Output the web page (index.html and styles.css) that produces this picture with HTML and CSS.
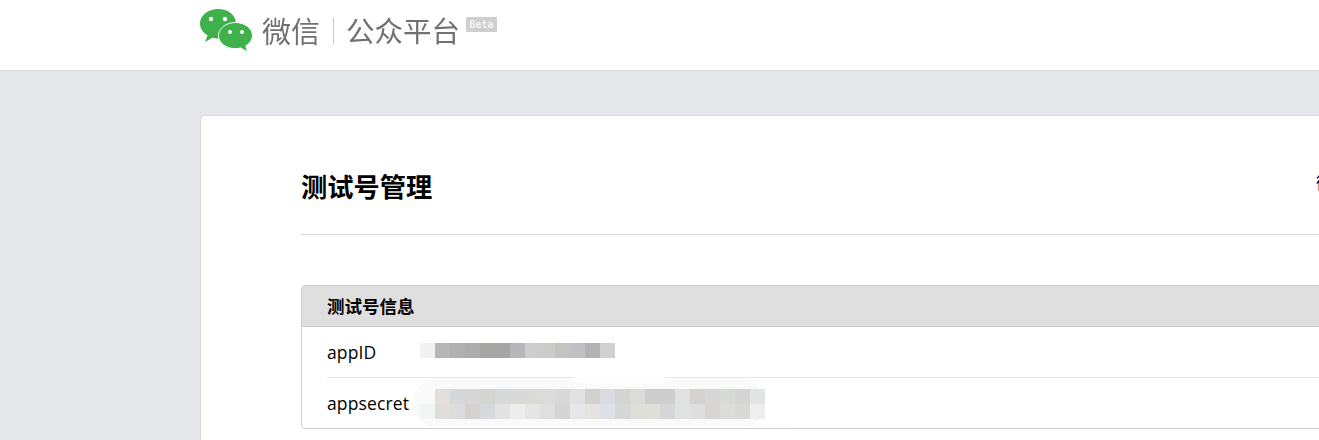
FILE: index.html
```html
<!DOCTYPE html>
<html lang="zh-CN">
<head>
<meta charset="utf-8">
<title>微信公众平台</title>
<link rel="stylesheet" href="styles.css">
</head>
<body>
<header class="topbar">
  <div class="logo">
    <svg class="logo-icon" width="54" height="44" viewBox="0 0 54 44" aria-hidden="true">
      <path d="M19 0C9 0 1 6.500 1 14.500c0 4.900 3 9.200 7.600 11.800L6 33l7.400-4.200c1.800.4 3.700.7 5.600.7 10 0 18-6.500 18-15S29 0 19 0z" fill="#3fb14a"/>
      <circle cx="12" cy="10" r="2.200" fill="#fff"/>
      <circle cx="26" cy="10" r="2.200" fill="#fff"/>
      <path d="M36.500 13.500c-9.300 0-17 5.900-17 13.200s7.700 13 17 13c1.900 0 3.700-.2 5.400-.7L48.500 43l-1.700-6.200c3.900-2.400 6.700-6 6.700-10.100 0-7.300-7.700-13.200-17-13.200z" fill="#3fb14a" stroke="#fff" stroke-width="1"/>
      <circle cx="31" cy="23" r="2" fill="#fff"/>
      <circle cx="43" cy="23" r="2" fill="#fff"/>
    </svg>
    <span class="logo-name">微信</span>
    <span class="logo-sep"></span>
    <span class="logo-sub">公众平台</span>
    <span class="logo-beta">Beta</span>
  </div>
</header>
<main class="page">
  <section class="card">
    <div class="title-row">
      <h1 class="title">测试号管理</h1>
      <a class="title-link" href="#">微信号</a>
    </div>
    <div class="panel">
      <h2 class="panel-head">测试号信息</h2>
      <div class="row">
        <span class="label">appID</span>
        <div class="mosaic">
          <div class="mosaic-line">
            <i style="background:#f1f1f0"></i><i style="background:#b6b6b6"></i><i style="background:#afb0b1"></i><i style="background:#aeadab"></i><i style="background:#a6a6a5"></i><i style="background:#a6a6a5"></i><i style="background:#b7b7b9"></i><i style="background:#cccdcf"></i><i style="background:#cbcbc9"></i><i style="background:#c3c3c2"></i><i style="background:#c0c0c4"></i><i style="background:#b3b1b2"></i><i style="background:#d0d1d3"></i>
          </div>
        </div>
      </div>
      <div class="row row-last">
        <span class="label">appsecret</span>
        <div class="mosaic">
          <div class="mosaic-line">
            <i style="background:#fafaf8"></i><i style="background:#e2dedc"></i><i style="background:#d4d8da"></i><i style="background:#d7d7d7"></i><i style="background:#d4d4d1"></i><i style="background:#d7d8da"></i><i style="background:#d8d9db"></i><i style="background:#dcdad5"></i><i style="background:#dbdcda"></i><i style="background:#d9d7d8"></i><i style="background:#e1e1e1"></i><i style="background:#d0d0cc"></i><i style="background:#dadbe0"></i><i style="background:#d5d4d4"></i><i style="background:#dcdbd7"></i><i style="background:#cdcdcd"></i><i style="background:#cccdcf"></i><i style="background:#e0e1e0"></i><i style="background:#d3d2d0"></i><i style="background:#d6d6d6"></i><i style="background:#d8dad8"></i><i style="background:#d6d4d2"></i><i style="background:#e3e4e6"></i>
          </div>
          <div class="mosaic-line">
            <i style="background:#f3f4f4"></i><i style="background:#dfdedb"></i><i style="background:#dadcde"></i><i style="background:#d3d2cf"></i><i style="background:#d7d9dd"></i><i style="background:#e2e2e2"></i><i style="background:#ededeb"></i><i style="background:#e5e5e5"></i><i style="background:#dfdfdf"></i><i style="background:#d5d5d7"></i><i style="background:#e7e7e7"></i><i style="background:#e4e3df"></i><i style="background:#dfe0e5"></i><i style="background:#d8d7d7"></i><i style="background:#dddeD8"></i><i style="background:#dfdfda"></i><i style="background:#d6d6d8"></i><i style="background:#e0e2e1"></i><i style="background:#dedede"></i><i style="background:#d8d6d4"></i><i style="background:#dcdddb"></i><i style="background:#d8dad8"></i><i style="background:#eeeeee"></i>
          </div>
        </div>
        <span class="smudge smudge-main"></span>
        <span class="smudge smudge-top"></span>
        <span class="smudge smudge-bottom"></span>
      </div>
    </div>
  </section>
</main>
</body>
</html>
```
FILE: styles.css
```css
* { box-sizing: border-box; }
html, body { margin: 0; height: 100%; overflow: hidden; }
body {
  background: #e5e7eb;
  font-family: "Open Sans", "Noto Sans CJK SC", sans-serif;
  color: #000;
}
.topbar {
  height: 71px;
  background: #fff;
  border-bottom: 1px solid #d9dadc;
  padding-left: 199px;
}
.logo { display: flex; align-items: flex-start; filter: blur(.35px); }
.logo-icon { margin-top: 9px; flex: none; }
.logo-name, .logo-sub {
  font-family: "Noto Sans CJK SC", sans-serif;
  font-weight: 400;
  line-height: 30px;
  color: #717171;
  margin-top: 15px;
}
.logo-name { margin-left: 9px; font-size: 29px; }
.logo-sub { font-size: 28.5px; }
.logo-sep { width: 1px; height: 26px; background: #c4c4c4; margin: 18px 12px 0 13px; }
.logo-beta {
  margin: 17px 0 0 6px;
  width: 31px;
  height: 15px;
  background: #cfcfcf;
  color: #f4f4f4;
  font-family: "DejaVu Sans Mono", monospace;
  font-size: 10px;
  font-weight: 700;
  line-height: 15px;
  text-align: center;
}
.page { padding: 44px 0 0 200px; }
.card {
  width: 1300px;
  height: 400px;
  background: #fff;
  border: 1px solid #d8d9db;
  border-radius: 5px;
  padding: 0 0 0 100px;
}
.title-row {
  display: flex;
  align-items: center;
  height: 119px;
  border-bottom: 1px solid #d5d5d5;
  padding-top: 22px;
  margin-bottom: 50px;
}
.title {
  flex: none;
  width: 1015px;
  margin: 0;
  font-family: "Noto Sans CJK SC", sans-serif;
  font-size: 26.25px;
  font-weight: 700;
  line-height: 36px;
}
.title-link {
  flex: none;
  color: #000060;
  font-family: "Noto Sans CJK SC", sans-serif;
  font-size: 17.5px;
  text-decoration: none;
  margin-top: -9px;
}
.panel {
  width: 1200px;
  height: 144px;
  border: 1px solid #d0d0d0;
  border-radius: 4px;
  overflow: hidden;
}
.panel-head {
  margin: 0;
  height: 41px;
  padding-left: 25px;
  background: #dfdfdf;
  border-bottom: 1px solid #c9c9c9;
  font-family: "Noto Sans CJK SC", sans-serif;
  font-size: 17.5px;
  font-weight: 700;
  line-height: 40px;
}
.row {
  position: relative;
  display: flex;
  align-items: center;
  height: 51px;
  margin-left: 25px;
  border-bottom: 1px solid #e4e4e4;
  font-size: 17.5px;
  letter-spacing: .12px;
}
.row-last { border-bottom: 0; height: 50px; }
.label { flex: none; width: 93px; }
.mosaic { position: relative; z-index: 1; margin-bottom: 3px; }
.row-last .mosaic { margin-bottom: -2px; }
.mosaic-line { display: flex; height: 15px; }
.mosaic-line i { flex: none; display: block; width: 15px; height: 15px; }
.smudge { position: absolute; background: #fcfcfc; }
.smudge-main { left: 87px; top: 2px; width: 350px; height: 46px; border-radius: 20px; background: #fafafa; }
.smudge-top { left: 240px; top: -3px; width: 105px; height: 10px; background: #fdfdfd; border-radius: 50%; }
.smudge-bottom { left: 420px; top: 44px; width: 45px; height: 12px; background: #fdfdfd; border-radius: 50%; }
```
